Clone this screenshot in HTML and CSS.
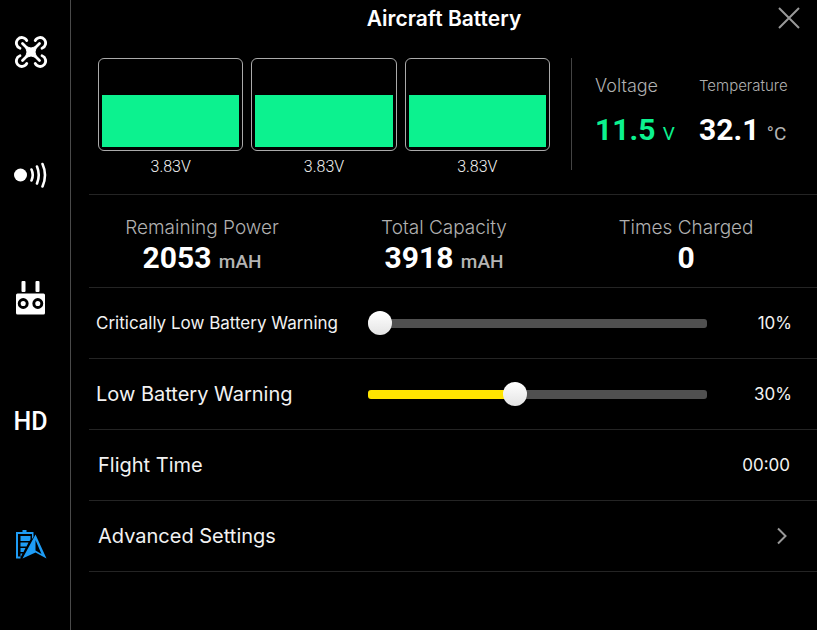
FILE: index.html
```html
<!DOCTYPE html>
<html lang="en">
  <head>
    <meta charset="UTF-8" />
    <title>Aircraft Battery</title>
    <link rel="stylesheet" href="styles.css">
  </head>
  <body>
    <nav class="sidebar">
      <button class="tab" aria-label="Aircraft">
        <svg width="34" height="34" viewBox="0 0 34 34" fill="none" stroke="currentColor">
          <g stroke-width="2.8" stroke-linecap="round">
            <path d="M6 13.2A5.5 5.5 0 1 1 12.8 5.6" />
            <path d="M21.2 5.6A5.5 5.5 0 1 1 28 13.2" />
            <path d="M6 20.8A5.5 5.5 0 1 0 12.8 28.4" />
            <path d="M21.2 28.4A5.5 5.5 0 1 0 28 20.8" />
            <path d="M8.5 8.5L25.5 25.5M25.5 8.5L8.5 25.5" />
          </g>
          <path d="M11.5 11.5Q17 14.5 22.5 11.5Q19.5 17 22.5 22.5Q17 19.5 11.5 22.5Q14.5 17 11.5 11.5Z" fill="currentColor" />
        </svg>
      </button>
      <button class="tab" aria-label="Signal">
        <svg width="34" height="34" viewBox="0 0 34 34" fill="none" stroke="currentColor" stroke-width="2.6" stroke-linecap="round">
          <circle cx="6.5" cy="17" r="6.5" fill="currentColor" stroke="none" />
          <path d="M17.5 11.5Q20 17 17.5 22.5M23 8.5Q26.5 17 23 25.5M28.5 6Q33.5 17 28.5 28.5" />
        </svg>
      </button>
      <button class="tab" aria-label="Remote controller">
        <svg width="34" height="34" viewBox="0 0 34 34">
          <rect x="7.5" y="0" width="4" height="11" rx="1" fill="currentColor" />
          <rect x="21.5" y="0" width="4" height="11" rx="1" fill="currentColor" />
          <rect x="2" y="12.5" width="29" height="21" rx="1.5" fill="currentColor" />
          <g fill="none" stroke="#000" stroke-width="2.9">
            <circle cx="9.2" cy="22.5" r="4" />
            <circle cx="23.8" cy="22.5" r="4" />
          </g>
        </svg>
      </button>
      <button class="tab tab-text">HD</button>
      <button class="tab active" aria-label="Battery">
        <svg width="34" height="34" viewBox="0 0 34 34" fill="currentColor">
          <path d="M2 5H8.5V3H12.5V5H19.5V10L18 12V7H4V29.5H6.5V31.5H2Z" />
          <path d="M6.5 9H16.5V12.5L15.5 14H6.5ZM6.5 15.5H14.5L12.5 19.5H6.5ZM6.5 21H11.5L9.5 25H6.5ZM6.5 26.5H8.5L7 29.5H6.5Z" />
          <path fill-rule="evenodd" d="M21.5 7.5L32.5 31.5L21.5 25.5L8.5 31.5ZM21.5 13V23.5L27.5 27Z" />
        </svg>
      </button>
    </nav>

    <main class="panel">
      <header class="panel-header">
        <h1>Aircraft Battery</h1>
        <button class="close" aria-label="Close">
          <svg width="22" height="22" viewBox="0 0 22 22" fill="none" stroke="currentColor" stroke-width="2">
            <path d="M1 1L21 21M21 1L1 21" />
          </svg>
        </button>
      </header>

      <section class="overview">
        <div class="cells">
          <div class="cell">
            <div class="cell-box"><div class="cell-fill" style="height: 61%"></div></div>
            <span>3.83V</span>
          </div>
          <div class="cell">
            <div class="cell-box"><div class="cell-fill" style="height: 61%"></div></div>
            <span>3.83V</span>
          </div>
          <div class="cell">
            <div class="cell-box"><div class="cell-fill" style="height: 61%"></div></div>
            <span>3.83V</span>
          </div>
        </div>
        <div class="readings">
          <div class="reading voltage">
            <h2>Voltage</h2>
            <p class="value">11.5 <small>V</small></p>
          </div>
          <div class="reading temperature">
            <h2>Temperature</h2>
            <p class="value">32.1 <small>°C</small></p>
          </div>
        </div>
      </section>

      <section class="stats">
        <div class="stat">
          <h2>Remaining Power</h2>
          <p class="value">2053 <small>mAH</small></p>
        </div>
        <div class="stat">
          <h2>Total Capacity</h2>
          <p class="value">3918 <small>mAH</small></p>
        </div>
        <div class="stat">
          <h2>Times Charged</h2>
          <p class="value">0</p>
        </div>
      </section>

      <section class="settings">
        <div class="row slider-row">
          <label class="long" for="critical">Critically Low Battery Warning</label>
          <input type="range" id="critical" min="10" max="50" value="10" style="--fill: 0%" />
          <output for="critical">10%</output>
        </div>
        <div class="row slider-row">
          <label for="low">Low Battery Warning</label>
          <input type="range" id="low" min="15" max="50" value="30" style="--fill: 43%" />
          <output for="low">30%</output>
        </div>
        <div class="row">
          <span>Flight Time</span>
          <span class="time">00:00</span>
        </div>
        <a class="row" href="#advanced">
          <span>Advanced Settings</span>
          <svg class="chevron" width="10" height="18" viewBox="0 0 10 18" fill="none" stroke="currentColor" stroke-width="2">
            <path d="M1 1.5L8.5 9L1 16.5" />
          </svg>
        </a>
      </section>
    </main>

    <script>
      // Keep the coloured part of each slider and its percentage in step
      document.querySelectorAll("input[type=range]").forEach((slider) => {
        slider.addEventListener("input", () => {
          var fill = (slider.value - slider.min) / (slider.max - slider.min);
          slider.style.setProperty("--fill", fill * 100 + "%");
          slider.nextElementSibling.value = slider.value + "%";
        });
      });
    </script>
  </body>
</html>
```
FILE: styles.css
```css
* {
  box-sizing: border-box;
}
body {
  display: flex;
  min-height: 100vh;
  margin: 0;
  background-color: #000;
  color: #f2f2f2;
  font-family: Inter, "Liberation Sans", sans-serif;
  font-size: 20px;
}
h1,
h2,
p {
  margin: 0;
}
button {
  padding: 0;
  border: none;
  background: none;
  color: inherit;
  font-family: inherit;
  cursor: pointer;
}
svg {
  display: block;
}

/* Sidebar */
.sidebar {
  display: flex;
  flex-direction: column;
  align-items: center;
  gap: 83px;
  width: 71px;
  padding: 32px 9px 0 0;
  border-right: 1px solid #4a4a4a;
}
.tab {
  display: flex;
  align-items: center;
  justify-content: center;
  width: 40px;
  height: 40px;
  color: #fff;
}
.tab-text {
  font-family: Roboto, sans-serif;
  font-size: 25px;
  font-weight: 500;
}
.tab.active {
  color: #1e9cf5;
}

/* Header */
.panel {
  flex: 1;
  min-width: 0;
}
.panel-header {
  display: grid;
  grid-template-columns: 1fr auto 1fr;
  align-items: center;
  height: 36px;
  padding: 0 17px;
}
h1 {
  grid-column: 2;
  font-size: 21px;
  font-weight: 600;
  color: #fff;
}
.close {
  justify-self: end;
  color: #999;
}

/* Cells and readings */
.overview {
  display: flex;
  height: 159px;
  margin-left: 18px;
  padding: 22px 0 24px 9px;
  border-bottom: 1px solid #242424;
}
.cells {
  flex: 1;
  display: grid;
  grid-template-columns: repeat(3, 1fr);
  gap: 8px;
}
.cell {
  font-family: Roboto, sans-serif;
  font-size: 16px;
  font-weight: 300;
  line-height: 18px;
  text-align: center;
}
.cell-box {
  display: flex;
  align-items: flex-end;
  height: 93px;
  margin-bottom: 7px;
  padding: 3px;
  border: 1px solid #aaa;
  border-radius: 6px;
}
.cell-fill {
  width: 100%;
  background-color: #0cf28f;
}
.readings {
  display: flex;
  gap: 22px;
  width: 246px;
  margin-left: 21px;
  padding: 16px 0 0 23px;
  border-left: 1px solid #444;
}
h2 {
  font-size: 18px;
  font-weight: 300;
  line-height: 24px;
  color: #b0b0b0;
}
.value {
  font-family: Roboto, sans-serif;
  font-size: 30px;
  font-weight: 700;
  line-height: 36px;
  color: #fff;
  white-space: nowrap;
}
.value small {
  font-size: 19px;
  font-weight: 500;
  color: #b4b4b4;
}
.reading {
  width: 82px;
}
.reading .value {
  margin-top: 14px;
}
.reading small {
  font-weight: 400;
}
.voltage .value,
.voltage small {
  color: #0cf28f;
}
.temperature h2 {
  font-size: 15px;
}

/* Capacity figures */
.stats {
  display: grid;
  grid-template-columns: repeat(3, 1fr);
  gap: 16px;
  height: 93px;
  margin-left: 18px;
  padding: 21px 18px 0 0;
  border-bottom: 1px solid #242424;
  text-align: center;
}
.stat h2 {
  font-size: 19px;
}

/* Settings list */
.settings {
  margin-left: 18px;
}
.row {
  display: flex;
  align-items: center;
  justify-content: space-between;
  min-height: 71px;
  padding: 0 27px 0 9px;
  border-bottom: 1px solid #242424;
  color: inherit;
  text-decoration: none;
}
.slider-row {
  padding: 0 25px 0 7px;
}
label {
  width: 272px;
}
.long {
  font-size: 17px;
}
output {
  width: 85px;
  font-size: 17px;
  text-align: right;
}
.time {
  font-size: 17px;
}
.chevron {
  margin-right: 3px;
  color: #999;
}
input[type="range"] {
  flex: 1;
  min-width: 0;
  height: 24px;
  margin: 0;
  appearance: none;
  background: none;
  cursor: pointer;
}
input[type="range"]::-webkit-slider-runnable-track {
  height: 9px;
  border-radius: 3px;
  background: linear-gradient(to right, #ffe400 var(--fill), #505050 var(--fill));
}
input[type="range"]::-webkit-slider-thumb {
  appearance: none;
  width: 24px;
  height: 24px;
  margin-top: -8px;
  border-radius: 50%;
  background: linear-gradient(#fff, #e4e4e4);
}
```
